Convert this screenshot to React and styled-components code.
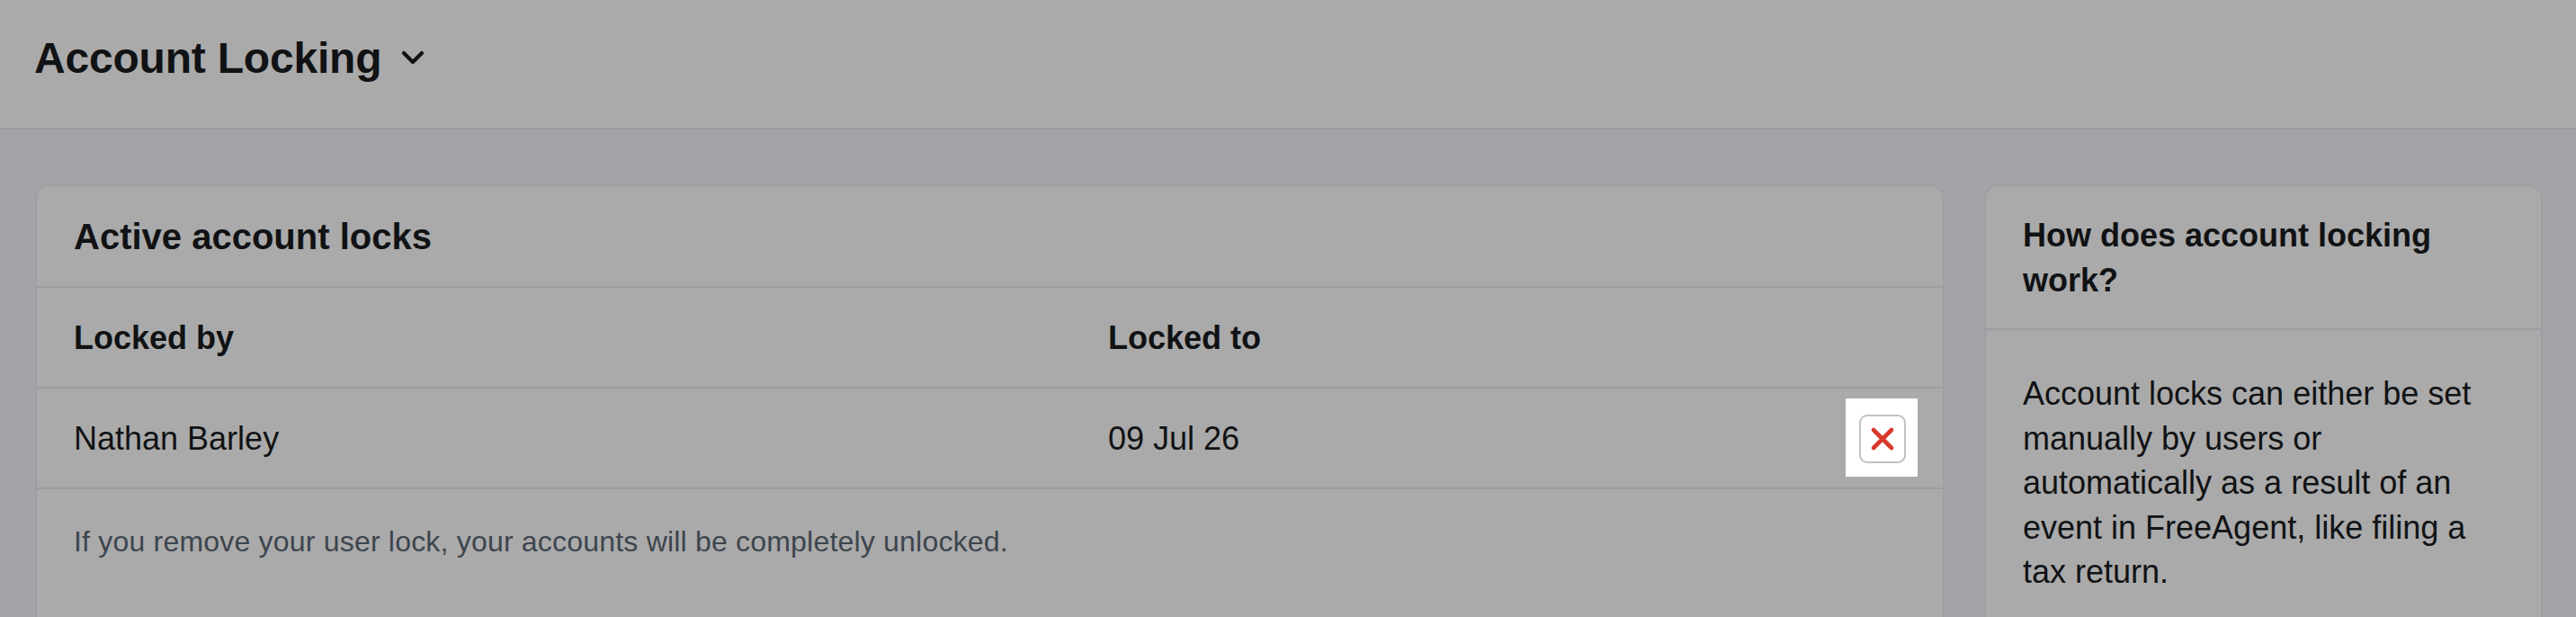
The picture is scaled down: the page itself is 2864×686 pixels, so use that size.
import React from "react";
import styled, { createGlobalStyle } from "styled-components";

const GlobalStyle = createGlobalStyle`
  *, *::before, *::after {
    box-sizing: border-box;
  }
  html, body {
    margin: 0;
    padding: 0;
    background: #a3a4a8;
    overflow: hidden;
  }
  body {
    font-family: "Liberation Sans", Arial, sans-serif;
    color: #111214;
  }
`;

const Page = styled.div`
  min-height: 100vh;
  display: flex;
  flex-direction: column;
`;

const TopBar = styled.header`
  height: 144px;
  display: flex;
  align-items: flex-start;
  gap: 22px;
  padding: 41px 38px 0;
  background: #aaaaaa;
  border-bottom: 2px solid #9c9da2;
`;

const PageTitle = styled.h1`
  margin: 0;
  font-size: 48px;
  line-height: 48px;
  font-weight: 700;
  letter-spacing: -0.2px;
  color: #111214;
`;

const ChevronWrap = styled.span`
  display: flex;
  margin-top: 15px;
`;

const Main = styled.main`
  display: flex;
  align-items: flex-start;
  gap: 44px;
  padding: 61px 37px 0 39px;
`;

const Card = styled.section`
  flex: ${(p) => (p.$side ? "0 0 621px" : "1")};
  background: #aaaaaa;
  border: 2px solid #9e9fa4;
  border-radius: 16px;
  min-height: 600px;
`;

const CardHeader = styled.div`
  display: flex;
  align-items: center;
  min-height: ${(p) => (p.$tall ? "160px" : "113px")};
  padding: ${(p) => (p.$tall ? "18px 41px 0" : "0 41px")};
  border-bottom: 2px solid #9c9da2;
`;

const CardTitle = styled.h2`
  margin: 0;
  font-size: ${(p) => p.$size || 40}px;
  line-height: 50px;
  font-weight: 700;
  color: #111214;
  align-self: ${(p) => (p.$top ? "flex-start" : "center")};
  margin-top: ${(p) => (p.$top ? "12px" : "0")};
`;

const Row = styled.div`
  display: grid;
  grid-template-columns: 1150px 1fr 52px;
  align-items: center;
  height: 112px;
  padding: 2px 41px 0;
  border-bottom: 2px solid #9c9da2;
  font-size: 36px;
  font-weight: ${(p) => (p.$head ? 700 : 400)};
  color: #111214;
`;

const Cell = styled.div`
  white-space: nowrap;
`;

const Spotlight = styled.div`
  background: #ffffff;
  margin: -18px -13px -15px -15px;
  padding: 18px 13px 15px 15px;
  display: flex;
`;

const RemoveButton = styled.button`
  width: 52px;
  height: 54px;
  padding: 0;
  display: flex;
  align-items: center;
  justify-content: center;
  background: #ffffff;
  border: 2px solid #bfc3c8;
  border-radius: 9px;
  cursor: pointer;
`;

const Note = styled.p`
  margin: 0;
  padding: 38px 41px;
  font-size: 32px;
  line-height: 40px;
  letter-spacing: 0.2px;
  color: #3d454d;
`;

const SideBody = styled.p`
  margin: 0;
  padding: 46px 41px 0;
  font-size: 36px;
  line-height: 49.5px;
  color: #111214;
`;

const Chevron = () => (
  <svg width="26" height="16" viewBox="0 0 26 16" fill="none">
    <path
      d="M3 3 L13 13 L23 3"
      stroke="#111214"
      strokeWidth="4.2"
      strokeLinecap="round"
      strokeLinejoin="round"
    />
  </svg>
);

const CrossIcon = () => (
  <svg width="28" height="28" viewBox="0 0 28 28" fill="none">
    <path
      d="M4 4 L24 24 M24 4 L4 24"
      stroke="#d8392c"
      strokeWidth="4.6"
      strokeLinecap="round"
    />
  </svg>
);

const App = () => {
  const locks = [{ by: "Nathan Barley", to: "09 Jul 26" }];

  return (
    <>
      <GlobalStyle />
      <Page>
        <TopBar>
          <PageTitle>Account Locking</PageTitle>
          <ChevronWrap>
            <Chevron />
          </ChevronWrap>
        </TopBar>
        <Main>
          <Card>
            <CardHeader>
              <CardTitle>Active account locks</CardTitle>
            </CardHeader>
            <Row $head>
              <Cell>Locked by</Cell>
              <Cell>Locked to</Cell>
              <Cell />
            </Row>
            {locks.map((lock) => (
              <Row key={lock.by}>
                <Cell>{lock.by}</Cell>
                <Cell>{lock.to}</Cell>
                <Spotlight>
                  <RemoveButton aria-label="Remove lock">
                    <CrossIcon />
                  </RemoveButton>
                </Spotlight>
              </Row>
            ))}
            <Note>
              If you remove your user lock, your accounts will be completely
              unlocked.
            </Note>
          </Card>
          <Card $side>
            <CardHeader $tall>
              <CardTitle $size={36} $top>
                How does account locking work?
              </CardTitle>
            </CardHeader>
            <SideBody>
              Account locks can either be set manually by users or
              automatically as a result of an event in FreeAgent, like filing
              a tax return.
            </SideBody>
          </Card>
        </Main>
      </Page>
    </>
  );
};

export default App;
